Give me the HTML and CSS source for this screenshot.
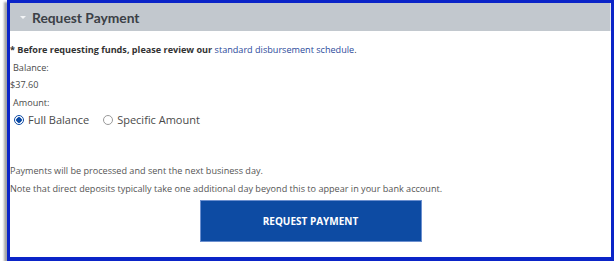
FILE: index.html
```html
<!DOCTYPE html>
<html lang="en">
<head>
    <meta charset="UTF-8">
    <title>Request Payment</title>
    <link rel="stylesheet" href="styles.css">
</head>
<body>
    <div class="frame">
        <div class="panel-header">
            <span class="caret"></span>
            <span class="panel-title">Request Payment</span>
        </div>
        <div class="panel-body">
            <p class="notice"><b>* Before requesting funds, please review our</b> <a href="#">standard disbursement schedule</a>.</p>
            <div class="label">Balance:</div>
            <div class="value">$37.60</div>
            <div class="label">Amount:</div>
            <div class="choices">
                <label class="choice"><span class="radio checked"></span>Full Balance</label>
                <label class="choice"><span class="radio"></span>Specific Amount</label>
            </div>
            <p class="info">Payments will be processed and sent the next business day.</p>
            <p class="info">Note that direct deposits typically take one additional day beyond this to appear in your bank account.</p>
            <div class="actions">
                <button class="submit">REQUEST PAYMENT</button>
            </div>
        </div>
    </div>
</body>
</html>
```
FILE: styles.css
```css
body {
    margin: 0;
    background-color: #fff;
    font-family: 'Open Sans', sans-serif;
    color: #4a4a4a;
}
.frame {
    box-sizing: border-box;
    margin-left: 7px;
    width: 607px;
    height: 261px;
    border: 3px solid #0b24c8;
    border-bottom-width: 4px;
    box-shadow: -3px 2px 2px rgba(0, 0, 0, 0.35);
}
.panel-header {
    display: flex;
    align-items: center;
    height: 28px;
    background-color: #c2c8ce;
    border-right: 1px solid #e4e8ec;
}
.caret {
    width: 0;
    height: 0;
    margin: 0 6px 0 10px;
    border-left: 3px solid transparent;
    border-right: 3px solid transparent;
    border-top: 3px solid #f2f4f6;
}
.panel-title {
    font-family: 'Lato', sans-serif;
    font-weight: bold;
    font-size: 13.8px;
    color: #3b4046;
}
.panel-body {
    padding-top: 10px;
    font-size: 9.1px;
    line-height: 17.5px;
}
.notice {
    margin: 0;
    color: #333;
}
.notice a {
    color: #2b4a9b;
    text-decoration: none;
}
.label {
    padding-left: 3px;
}
.choices {
    display: flex;
    padding-left: 4px;
    font-size: 11px;
    line-height: 18px;
    margin-bottom: 33px;
}
.choice {
    display: flex;
    align-items: center;
    margin-right: 14px;
}
.radio {
    box-sizing: border-box;
    width: 10px;
    height: 10px;
    margin-right: 4px;
    border: 1px solid #9a9a9a;
    border-radius: 50%;
}
.radio.checked {
    border-color: #0b4aa5;
    background: radial-gradient(circle, #0b4aa5 0 2.5px, #fff 3px);
}
.info {
    margin: 0;
    color: #555;
}
.actions {
    display: flex;
    justify-content: center;
    margin-top: 3px;
}
.submit {
    width: 222px;
    height: 42px;
    background-color: #0d4ba3;
    border: 1px solid #6b8fcf;
    color: #fff;
    font-family: 'Open Sans', sans-serif;
    font-weight: bold;
    font-size: 10px;
}
```
